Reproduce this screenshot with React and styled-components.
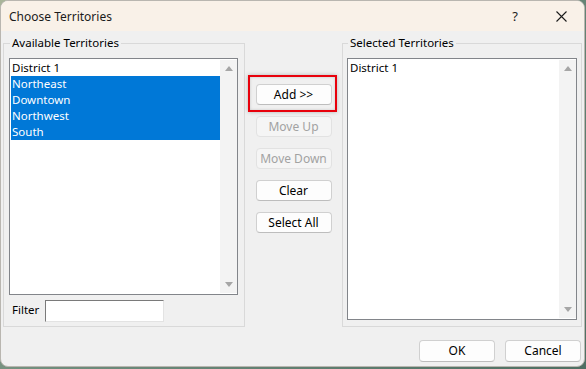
import React from "react";
import styled, { createGlobalStyle } from "styled-components";

const Global = createGlobalStyle`
  html, body { margin: 0; padding: 0; }
  body {
    background: linear-gradient(135deg, #a9b59a 0%, #6f8c7c 45%, #4f6f63 100%);
    font-family: "Noto Sans", "Liberation Sans", sans-serif;
    font-size: 11.5px;
    color: #000;
  }
  * { box-sizing: border-box; }
`;

const Desktop = styled.div`
  width: 586px;
  height: 369px;
  overflow: hidden;
`;

const Window = styled.div`
  width: 585px;
  height: 367px;
  border: 1px solid #b9b6b0;
  border-radius: 8px;
  background: #f0f0f0;
  overflow: hidden;
  display: flex;
  flex-direction: column;
`;

const TitleBar = styled.div`
  height: 30px;
  flex: none;
  background: #f9f1e8;
  display: flex;
  align-items: center;
  padding-left: 8px;
`;

const Title = styled.div`
  flex: 1;
  font-size: 12px;
  color: #1b1b1b;
`;

const TitleButton = styled.div`
  width: 46px;
  height: 30px;
  display: flex;
  align-items: center;
  justify-content: center;
  font-size: 13px;
  color: #1b1b1b;
`;

const Body = styled.div`
  flex: 1;
  padding: 4px 2px 0 2px;
  display: flex;
  flex-direction: column;
`;

const Main = styled.div`
  display: flex;
  height: 292px;
`;

const Group = styled.fieldset`
  margin: 0;
  min-width: 0;
  width: ${(p) => p.$width}px;
  border: 1px solid #d9d9d9;
  padding: ${(p) => p.$pad};
  display: flex;
  flex-direction: column;
`;

const Legend = styled.legend`
  margin-left: 1px;
  padding: 0 2px;
  line-height: 16px;
  color: #000;
`;

const ListBox = styled.div`
  flex: 1;
  display: flex;
  border: 1px solid #82858a;
  background: #fff;
  padding: 1px 0 1px 1px;
  min-height: 0;
`;

const Items = styled.div`
  flex: 1;
`;

const Item = styled.div`
  height: 16px;
  line-height: 16px;
  padding-left: 1px;
  background: ${(p) => (p.$selected ? "#0078d7" : "transparent")};
  color: ${(p) => (p.$selected ? "#fff" : "#000")};
  white-space: nowrap;
`;

const ScrollBar = styled.div`
  width: 17px;
  flex: none;
  background: #f3f3f3;
  display: flex;
  flex-direction: column;
  justify-content: space-between;
  align-items: center;
  padding: 6px 0 6px;
`;

const Arrow = styled.div`
  width: 0;
  height: 0;
  border-left: 4px solid transparent;
  border-right: 4px solid transparent;
  ${(p) =>
    p.$down
      ? "border-top: 5px solid #a6a6a6;"
      : "border-bottom: 5px solid #a6a6a6;"}
`;

const FilterRow = styled.div`
  display: flex;
  align-items: center;
  margin-top: 5px;
  height: 22px;
`;

const FilterLabel = styled.label`
  width: 36px;
  padding-left: 3px;
  line-height: 14px;
  margin-top: -2px;
`;

const FilterInput = styled.input`
  width: 119px;
  height: 22px;
  border: 1px solid #e3e3e3;
  border-top-color: #7a7a7a;
  border-left-color: #7a7a7a;
  background: #fff;
  padding: 0 3px;
  font: inherit;
  outline: none;
`;

const ButtonColumn = styled.div`
  width: 97px;
  flex: none;
  display: flex;
  flex-direction: column;
  align-items: center;
  padding-top: 49px;
  gap: 11px;
`;

const Button = styled.button`
  width: ${(p) => p.$w || 76}px;
  height: ${(p) => p.$h || 21}px;
  border: 1px solid ${(p) => (p.disabled ? "#e2e2e2" : "#d0d0d0")};
  border-bottom-color: ${(p) => (p.disabled ? "#e2e2e2" : "#bdbdbd")};
  border-radius: 4px;
  background: ${(p) => (p.disabled ? "#f5f5f5" : "#fdfdfd")};
  color: ${(p) => (p.disabled ? "#a2a2a2" : "#000")};
  font: inherit;
  font-size: 12px;
  padding: 0;
  line-height: 18px;
`;

const Highlight = styled.div`
  position: relative;
  &::after {
    content: "";
    position: absolute;
    top: -9px;
    left: -8px;
    right: -5px;
    bottom: -7px;
    border: 2px solid #e8000b;
    box-shadow: 0 0 4px rgba(0, 0, 0, 0.25), inset 0 0 3px rgba(0, 0, 0, 0.18);
    pointer-events: none;
  }
`;

const Footer = styled.div`
  display: flex;
  justify-content: flex-end;
  gap: 10px;
  margin-top: 13px;
  padding-right: 1px;
`;

function List({ items }) {
  return (
    <ListBox>
      <Items>
        {items.map((it) => (
          <Item key={it.label} $selected={it.selected}>
            {it.label}
          </Item>
        ))}
      </Items>
      <ScrollBar>
        <Arrow />
        <Arrow $down />
      </ScrollBar>
    </ListBox>
  );
}

const available = [
  { label: "District 1" },
  { label: "Northeast", selected: true },
  { label: "Downtown", selected: true },
  { label: "Northwest", selected: true },
  { label: "South", selected: true },
];

export default function App() {
  return (
    <>
      <Global />
      <Desktop>
        <Window>
          <TitleBar>
            <Title>Choose Territories</Title>
            <TitleButton>?</TitleButton>
            <TitleButton>
              <svg width="11" height="11" viewBox="0 0 11 11">
                <path d="M0.5 0.5 L10.5 10.5 M10.5 0.5 L0.5 10.5" stroke="#1b1b1b" strokeWidth="1.1" />
              </svg>
            </TitleButton>
          </TitleBar>
          <Body>
            <Main>
              <Group $width={242} $pad="7px 6px 4px 5px">
                <Legend>Available Territories</Legend>
                <List items={available} />
                <FilterRow>
                  <FilterLabel>Filter</FilterLabel>
                  <FilterInput />
                </FilterRow>
              </Group>
              <ButtonColumn>
                <Highlight>
                  <Button>Add &gt;&gt;</Button>
                </Highlight>
                <Button disabled>Move Up</Button>
                <Button disabled>Move Down</Button>
                <Button>Clear</Button>
                <Button>Select All</Button>
              </ButtonColumn>
              <Group $width={240} $pad="7px 4px 6px 4px">
                <Legend>Selected Territories</Legend>
                <List items={[{ label: "District 1" }]} />
              </Group>
            </Main>
            <Footer>
              <Button $w={76} $h={22}>OK</Button>
              <Button $w={76} $h={22}>Cancel</Button>
            </Footer>
          </Body>
        </Window>
      </Desktop>
    </>
  );
}
